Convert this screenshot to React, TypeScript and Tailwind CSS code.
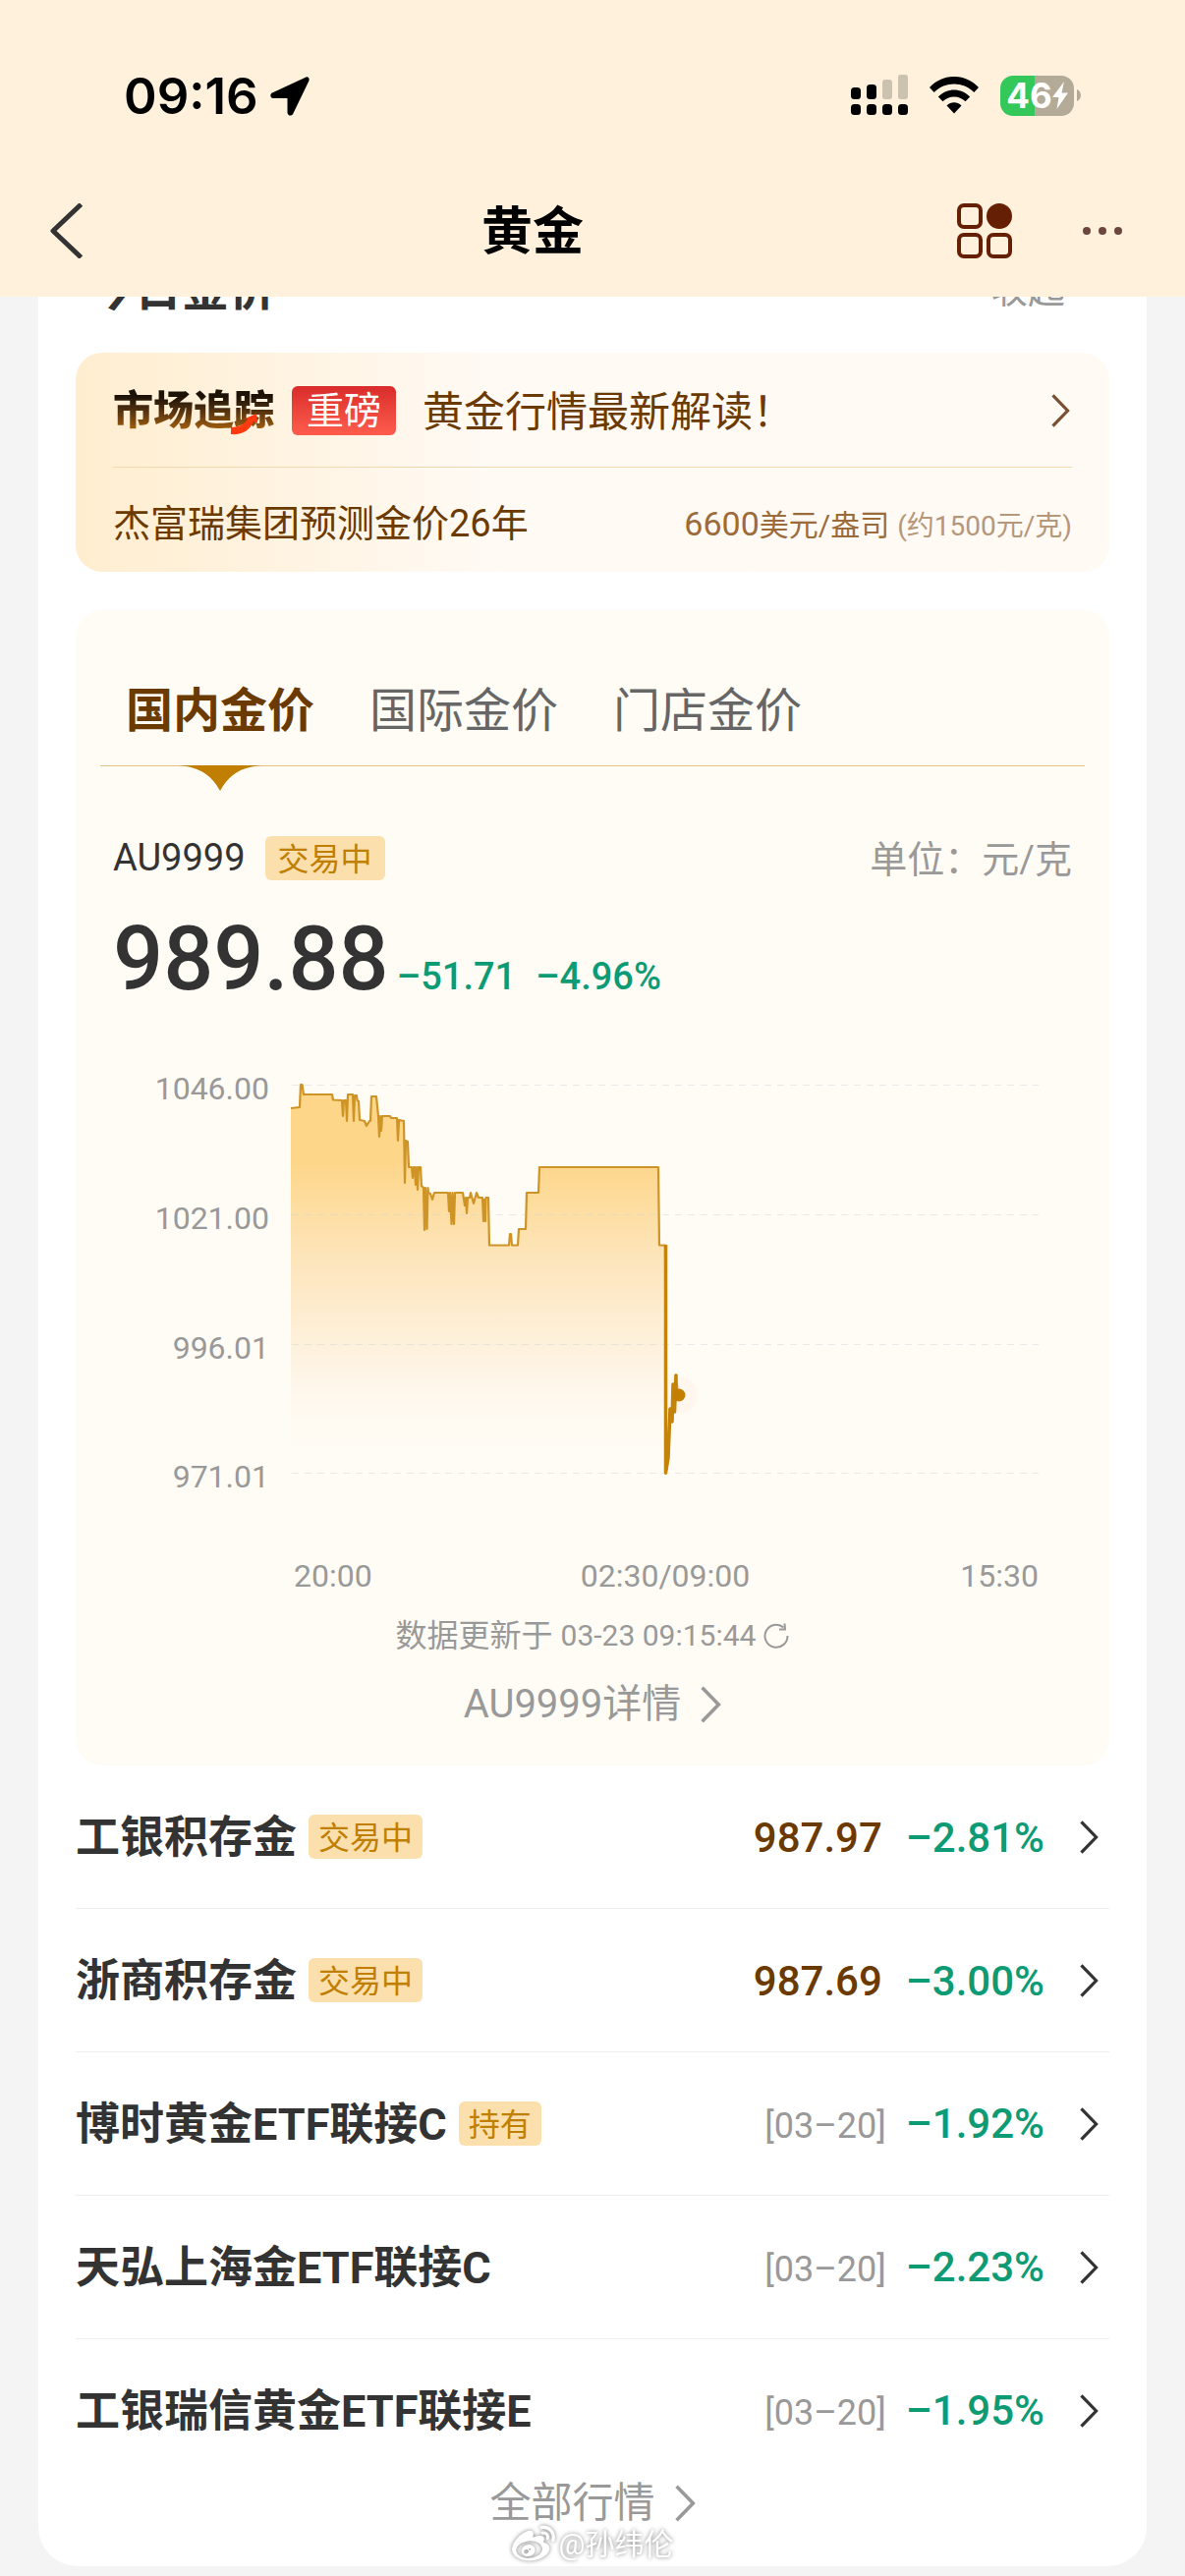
import { FaWeibo } from 'react-icons/fa';

type Quote = {
  name: string;
  tag?: string;
  price?: string;
  date?: string;
  change: string;
};

const quotes: Quote[] = [
  { name: '工银积存金', tag: '交易中', price: '987.97', change: '–2.81%' },
  { name: '浙商积存金', tag: '交易中', price: '987.69', change: '–3.00%' },
  { name: '博时黄金ETF联接C', tag: '持有', date: '[03–20]', change: '–1.92%' },
  { name: '天弘上海金ETF联接C', date: '[03–20]', change: '–2.23%' },
  { name: '工银瑞信黄金ETF联接E', date: '[03–20]', change: '–1.95%' },
];

const gridLines = [
  { y: 43, label: '1046.00' },
  { y: 175, label: '1021.00' },
  { y: 307, label: '996.01' },
  { y: 438, label: '971.01' },
];

const linePoints =
  '219,67 228,66 229,43 230.5,43 232,53 261,53 262,58.5 271,59 272,75 273,59 275,59 276,80 277,53 282,53 283,80 284,54 ' +
  '286,54 286.5,59 288,60 289,79 294,80 296,85 299,80 300,80 301,55 306,55 308,75 309,96 310,75 311,90 312,75 320,75 ' +
  '321,77 327,77 328,100 329,79 334,80 335,143 336,100 338,101 339,127 342,127 343,138 344,127 345,127 346,145 347,127 ' +
  '348,150 349,127 351,127 352,146 354,148 355,191 356,148 357.5,190 358.5,148 359,153 361,154 363,160 365,153 379,153 ' +
  '380,172 381,153 382.5,185 383.5,153 385,185 386,153 394,153 396,166 397,158 398,174 399,158 401,158 402,153 405,164 ' +
  '408,153 410,158 414,158 415,182 416,160 417,182 417.5,158 420,158 421,206.5 441,206.5 442,195 443,195 444,206.5 ' +
  '450,206.5 451,190 458,190 459,153 471,153 472,127 593,127 594,206.5 600,206.5 600.5,439 603,423 605,373 607,386 ' +
  '608,348 609.5,376 611,338 613,359';

const Chevron = ({ className }: { className: string }) => (
  <svg viewBox="0 0 20 36" fill="none" stroke="currentColor" strokeWidth="3.4" className={className} aria-hidden="true">
    <path d="M1.5 1.5 17.5 18 1.5 34.5" />
  </svg>
);

const Tag = ({ text, className = 'px-[10px]' }: { text: string; className?: string }) => (
  <span className={`h-[45px] rounded-md bg-[#fbe0ae] text-[32px] leading-[48px] text-[#c07f00] ${className}`}>
    {text}
  </span>
);

const StatusBar = () => (
  <div className="flex h-[156px] items-end justify-between pr-[113px] pb-[31px] pl-[126px]">
    <div className="flex items-center gap-3">
      <span className="font-['Inter'] text-[51px] leading-[54px] font-semibold text-black">09:16</span>
      <svg viewBox="0 0 40 40" className="size-10" aria-hidden="true">
        <path d="M36.500 .5 2 16.500C-.8 18 .2 22 3 22H17.500V36.500C17.500 40 22 40.800 23.400 37.600L39.300 4.500C40.400 1.800 38.600-.2 36.500.5Z" />
      </svg>
    </div>
    <div className="flex items-center pb-[7px]">
      <svg viewBox="0 0 58 42" className="mr-[22px] h-[42px] w-[58px]" aria-hidden="true">
        <g fill="#ccc2b0">
          <rect x="32" y="5" width="10" height="20" rx="3" />
          <rect x="48" width="10" height="25" rx="3" />
        </g>
        <rect y="13" width="10" height="12" rx="3.500" />
        <rect x="16" y="10" width="10" height="15" rx="3.500" />
        <rect y="30" width="10" height="11" rx="3.500" />
        <rect x="16" y="30" width="10" height="11" rx="3.500" />
        <rect x="32" y="30" width="10" height="11" rx="3.500" />
        <rect x="48" y="30" width="10" height="11" rx="3.500" />
      </svg>
      <svg viewBox="0 0 50 38" className="mr-[22px] h-[38px] w-[50px]" aria-hidden="true">
        <path d="M0 11C14-3.700 36-3.700 50 11L45.300 16C34 4.800 16 4.800 4.700 16Z" />
        <path d="M8.800 20.500C18 11 32 11 41.200 20.500L36.500 25.300C30 19 20 19 13.500 25.300Z" />
        <path d="M17.500 29.500C22 25.200 28 25.200 32.500 29.500L25 37.500Z" />
      </svg>
      <div className="relative flex h-[41px] w-[75px] items-center justify-center rounded-[13px] bg-[linear-gradient(90deg,#34c759_47%,#b3aa98_47%)]">
        <span className="font-['Inter'] text-[35px] leading-[41px] font-bold text-white">46</span>
        <svg viewBox="0 0 16 28" className="h-7 w-4" fill="#fff" aria-hidden="true">
          <path d="M12 0 0 16H6.500L4.500 28 16 11.500H9.500Z" />
        </svg>
        <svg viewBox="0 0 4 12" className="absolute -right-[7px] h-3 w-1" fill="#b3aa98" aria-hidden="true">
          <path d="M0 0C5.300 2 5.300 10 0 12Z" />
        </svg>
      </div>
    </div>
  </div>
);

const NavBar = () => (
  <nav className="flex h-[146px] items-center pt-3 pr-16 pl-[50px]">
    <button type="button" aria-label="返回" className="mr-[25px]">
      <svg viewBox="0 0 35 56" className="h-14 w-[35px]" fill="none" stroke="#333" strokeWidth="5" aria-hidden="true">
        <path d="M32.500 1 4 28 32.500 55" strokeLinejoin="round" />
      </svg>
    </button>
    <h1 className="flex-1 pt-1 text-center text-[52px] leading-[60px] font-semibold text-black">黄金</h1>
    <button type="button" aria-label="更多服务">
      <svg viewBox="0 0 56 56" className="size-14" fill="none" stroke="#651f04" strokeWidth="4" aria-hidden="true">
        <rect x="2" y="2" width="22" height="22" rx="5" />
        <rect x="2" y="32" width="22" height="22" rx="5" />
        <rect x="32" y="32" width="22" height="22" rx="5" />
        <circle cx="43" cy="13" r="13" fill="#651f04" stroke="none" />
      </svg>
    </button>
    <button type="button" aria-label="菜单" className="ml-[72px]">
      <svg viewBox="0 0 40 8" className="h-2 w-10" fill="#6b4740" aria-hidden="true">
        <circle cx="4" cy="4" r="4" />
        <circle cx="20" cy="4" r="4" />
        <circle cx="36" cy="4" r="4" />
      </svg>
    </button>
  </nav>
);

const NewsCard = () => (
  <section className="rounded-[27px] bg-linear-to-r from-[#ffedcf] to-[#fffaf4] to-40% px-[38px] text-[#6b3a00]">
    <a href="#news" className="flex h-[117px] items-center border-b border-[#f3d9b0] pt-0.5">
      <span className="relative">
        <span className="bg-linear-to-b from-[#1d1208] from-20% to-[#a35f0c] to-90% bg-clip-text text-[41px] leading-[50px] font-black text-transparent">
          市场追踪
        </span>
        <svg viewBox="0 0 28 22" className="absolute right-4 bottom-0 h-[22px] w-7" fill="#ff3a10" aria-hidden="true">
          <path d="M0 14C9 14 15 10 17 5L12 6 26 0 27 10 23 8C19 17 11 22 0 21Z" />
        </svg>
      </span>
      <span className="ml-[18px] rounded-md bg-linear-to-b from-[#d92b2b] to-[#ff5c4d] px-[15px] text-[38px] leading-[50px] text-white">
        重磅
      </span>
      <span className="ml-[27px] pt-1 text-[42px] leading-[50px]">黄金行情最新解读！</span>
      <Chevron className="mr-0.5 ml-auto h-[34px] w-[19px] text-[#7a5035]" />
    </a>
    <div className="flex h-[106px] items-center justify-between pt-2">
      <span className="text-[38px] leading-[50px]">杰富瑞集团预测金价26年</span>
      <span className="flex items-baseline text-[#9b6b3b]">
        <span className="text-[34px] leading-[50px]">6600</span>
        <span className="text-[30px]">美元/盎司</span>
        <span className="ml-2 text-[28px] text-[#b5977a]">(约1500元/克)</span>
      </span>
    </div>
  </section>
);

const PriceChart = () => (
  <svg viewBox="0 0 1052 576" className="mt-[38px] w-full" role="img" aria-label="AU9999">
    <defs>
      <linearGradient id="area" gradientUnits="userSpaceOnUse" x1="0" y1="43" x2="0" y2="439">
        <stop offset="0.200" stopColor="#fdd68a" />
        <stop offset="0.450" stopColor="#fde5bb" />
        <stop offset="0.750" stopColor="#fef5e8" />
        <stop offset="1" stopColor="#fffcf5" stopOpacity="0" />
      </linearGradient>
    </defs>
    <polygon points={`219,439 ${linePoints.split(' 600.5')[0]} 600,439`} fill="url(#area)" />
    {gridLines.map((line) => (
      <g key={line.label}>
        <path d={`M220 ${line.y}.5H980`} stroke="#cfd3dc" strokeOpacity="0.450" strokeDasharray="7 6" />
        <text x="197" y={line.y + 15} textAnchor="end" fontSize="32" fill="#999">
          {line.label}
        </text>
      </g>
    ))}
    <circle cx="614" cy="359" r="19" fill="#fff7ed" />
    <polyline points={linePoints} fill="none" stroke="#cf9426" strokeWidth="2.200" strokeLinejoin="round" />
    <path d="M600.500 206V438L603 423 605 373 607 386 608 348 609.500 376 611 338" fill="none" stroke="#c58409" strokeWidth="3.500" strokeLinejoin="round" />
    <circle cx="614" cy="359" r="6.500" fill="#c27f00" />
    <g fontSize="32" fill="#999">
      <text x="222" y="554">20:00</text>
      <text x="600" y="554" textAnchor="middle">02:30/09:00</text>
      <text x="980" y="554" textAnchor="end">15:30</text>
    </g>
  </svg>
);

const GoldCard = () => (
  <section className="mt-[39px] rounded-[27px] bg-[#fffcf5] pb-[38px]">
    <div role="tablist" className="mx-[25px] flex gap-14 border-b border-[#e3c283] pt-[53px] pl-[26px] text-[48px] text-[#666]">
      <button type="button" role="tab" aria-selected="true" className="relative h-[105px] pb-1.5 font-bold text-[#6b3a00]">
        国内金价
        <svg viewBox="0 0 84 26" className="absolute top-full left-[54px] h-[26px] w-[84px]" fill="#c07f00" aria-hidden="true">
          <path d="M0 0H84C62 2 51 10 42 26 33 10 22 2 0 0Z" />
        </svg>
      </button>
      <button type="button" role="tab" aria-selected="false" className="h-[105px] pb-1.5">国际金价</button>
      <button type="button" role="tab" aria-selected="false" className="h-[105px] pb-1.5">门店金价</button>
    </div>
    <div className="mt-[68px] flex items-center px-[38px] text-[38px] leading-[46px] text-[#333]">
      AU9999
      <Tag text="交易中" className="ml-5 px-[13px]" />
      <span className="ml-auto pt-1 text-[#999]">单位：元/克</span>
    </div>
    <div className="mt-[34px] flex items-baseline px-[38px] font-medium">
      <span className="text-[90px] leading-[90px] text-[#333]">989.88</span>
      <span className="ml-2 text-[38px] text-[#0d9b76]">–51.71</span>
      <span className="ml-5 text-[38px] text-[#0d9b76]">–4.96%</span>
    </div>
    <PriceChart />
    <div className="mt-2 flex h-10 items-center justify-center text-[32px] leading-10 text-[#999]">
      数据更新于
      <span className="ml-2 text-[30px]">03-23 09:15:44</span>
      <button type="button" aria-label="刷新" className="ml-2">
        <svg viewBox="0 0 26 26" className="size-[26px]" fill="none" stroke="#999" strokeWidth="2" aria-hidden="true">
          <path d="M24.500 13A11.500 11.500 0 1 1 20.500 4.500" />
          <path d="M16 6.500 22 6.500 21.500 .5" />
        </svg>
      </button>
    </div>
    <a href="#au9999" className="mt-[26px] flex h-12 items-center justify-center text-[40px] leading-[48px] text-[#999]">
      AU9999详情
      <Chevron className="ml-5 h-[38px] w-[21px]" />
    </a>
  </section>
);

const QuoteRow = ({ quote }: { quote: Quote }) => (
  <li className="border-b border-[#eee] last:border-b-0">
    <a href="#quote" className="flex h-[145px] items-center pr-[11px] leading-[60px]">
      <span className="mr-3 pt-0.5 text-[45px] font-bold text-[#333]">{quote.name}</span>
      {quote.tag && <Tag text={quote.tag} />}
      <span className="ml-auto flex items-baseline pt-0.5">
        {quote.price && <span className="mr-6 text-[42px] font-medium text-[#6b3a00]">{quote.price}</span>}
        {quote.date && <span className="mr-5 text-[36px] text-[#999]">{quote.date}</span>}
        <span className="text-[42px] font-medium text-[#0d9b76]">{quote.change}</span>
      </span>
      <Chevron className="ml-[36px] h-[34px] w-[19px] text-[#333]" />
    </a>
  </li>
);

export default function App() {
  return (
    <div className="min-h-screen bg-[#f4f4f4] pb-[11px] font-['Roboto','Noto_Sans_CJK_SC',sans-serif]">
      <header className="bg-[#fff1dc]">
        <StatusBar />
        <NavBar />
      </header>
      <main className="relative mx-[39px] overflow-hidden rounded-b-[40px] bg-white px-[38px] pb-10">
        <div className="-mt-[31px] mb-10 flex h-12 items-center justify-between pr-[45px] pl-3">
          <h2 className="text-[48px] leading-[48px] font-bold text-[#333]">今日金价</h2>
          <button type="button" className="text-[38px] leading-[48px] text-[#999]">收起</button>
        </div>
        <NewsCard />
        <GoldCard />
        <ul>
          {quotes.map((quote) => (
            <QuoteRow key={quote.name} quote={quote} />
          ))}
        </ul>
        <a href="#all" className="-mt-0.5 flex h-12 items-center justify-center text-[42px] leading-[48px] text-[#999]">
          全部行情
          <Chevron className="ml-5 h-[38px] w-[21px]" />
        </a>
        <div className="absolute inset-x-0 bottom-0 flex items-center justify-center gap-1 text-[30px] leading-[36px] text-white drop-shadow-[0_0_2px_rgba(0,0,0,0.5)]">
          <FaWeibo className="size-11" />
          @孙纬伦
        </div>
      </main>
    </div>
  );
}
